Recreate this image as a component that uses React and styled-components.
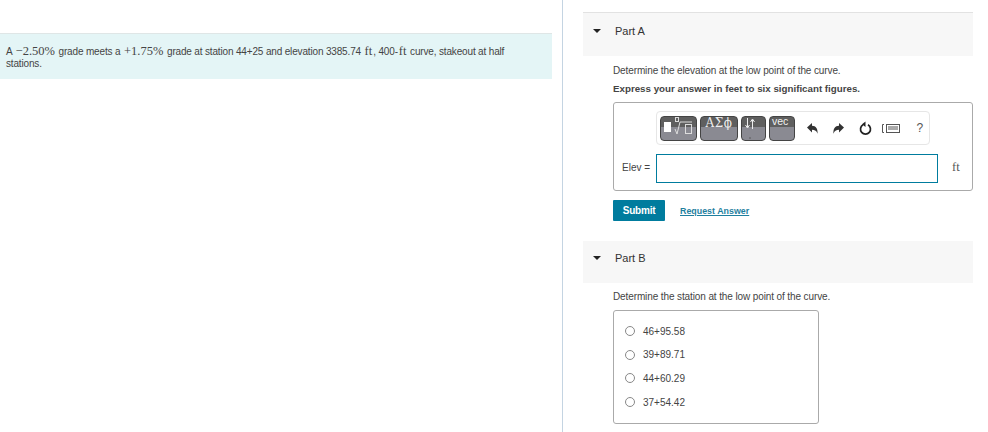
import React from 'react';
import styled, { createGlobalStyle } from 'styled-components';

const GlobalStyle = createGlobalStyle`
  html, body {
    margin: 0;
    padding: 0;
    background: #fff;
    font-family: "Liberation Sans", Arial, sans-serif;
    color: #333;
  }
`;

const Page = styled.div`
  display: grid;
  grid-template-columns: 562px 1px 1fr;
  height: 432px;
  overflow: hidden;
`;

const LeftPanel = styled.section`
  padding: 33px 10px 0 0;
`;

const Divider = styled.div`
  background: #c4d4e2;
`;

const RightPanel = styled.section`
  padding: 12px 15px 0 20px;
`;

const Intro = styled.div`
  background: #e4f5f6;
  border-top: 1px solid #dfe6e6;
  height: 46px;
  box-sizing: border-box;
  padding: 11px 30px 0 6px;
  font-size: 10px;
  letter-spacing: -0.16px;
  line-height: 12px;
  color: #444;
`;

const Formula = styled.span`
  font-family: "Liberation Serif", "Times New Roman", serif;
  font-size: 12.5px;
  letter-spacing: 0;
  margin: 0 1px;
  color: #444;
`;

const PartHeader = styled.div`
  display: flex;
  align-items: center;
  gap: 14px;
  height: ${(p) => p.$height}px;
  box-sizing: border-box;
  padding: 0 0 8px 10px;
  background: #f7f7f7;
  border-top: ${(p) => (p.$ruled ? '1px solid #e2e2e2' : 'none')};
  font-size: 11px;
  color: #333;
`;

const Caret = styled.span`
  width: 0;
  height: 0;
  border-left: 4.5px solid transparent;
  border-right: 4.5px solid transparent;
  border-top: 4px solid #222;
`;

const PartBody = styled.div`
  padding: ${(p) => p.$top}px 0 0 30px;
`;

const Prompt = styled.p`
  margin: 0;
  font-size: 10px;
  letter-spacing: -0.11px;
  line-height: 12px;
  color: #444;
`;

const Instruction = styled.p`
  margin: 6px 0 0;
  font-size: 9.75px;
  line-height: 12px;
  font-weight: bold;
  color: #444;
`;

const AnswerBox = styled.div`
  margin-top: 7px;
  width: 360px;
  height: 89px;
  box-sizing: border-box;
  border: 1px solid #aaa;
  border-radius: 3px;
  padding: 0 0 0 8px;
`;

const ToolbarRow = styled.div`
  display: flex;
  justify-content: center;
  height: 43px;
  box-sizing: border-box;
  padding: 8px 42px 0 34px;
`;

const Toolbar = styled.div`
  display: flex;
  align-items: center;
  gap: 3px;
  height: 34px;
  width: 100%;
  box-sizing: border-box;
  padding: 0 0 0 3px;
  border: 1px solid #e6e6e6;
  border-radius: 4px;
`;

const MathButton = styled.div`
  width: ${(p) => p.$width}px;
  height: 25px;
  flex: none;
  display: flex;
  align-items: flex-start;
  justify-content: ${(p) => (p.$start ? 'flex-start' : 'center')};
  box-sizing: border-box;
  padding-left: ${(p) => (p.$start ? 2 : 0)}px;
  border: 1px solid #444;
  border-radius: 4px;
  background: linear-gradient(#5f5f5f 0 45%, #8a8a92 45% 100%);
  color: #eee;
  font-size: 12px;
  line-height: 11px;
  overflow: hidden;
`;

const SerifGlyphs = styled.span`
  font-family: "DejaVu Serif", "Liberation Serif", serif;
  padding-top: 1px;
  letter-spacing: 0.5px;
`;

const VecLabel = styled.span`
  font-size: 10.5px;
  line-height: 9px;
  color: #f2f2f2;
`;

const ToolIcon = styled.svg`
  flex: none;
  display: block;
  margin-left: ${(p) => p.$left || 0}px;
`;

const Help = styled.span`
  flex: none;
  margin-left: 14px;
  font-size: 12px;
  color: #555;
`;

const InputRow = styled.div`
  display: flex;
  align-items: center;
  height: 29px;
  margin-top: 8px;
`;

const InputLabel = styled.span`
  width: 34px;
  padding-bottom: 2px;
  font-size: 10px;
  white-space: nowrap;
  color: #444;
`;

const AnswerInput = styled.div`
  width: 282px;
  height: 29px;
  box-sizing: border-box;
  border: 1px solid #007c9e;
`;

const Unit = styled.span`
  margin-left: 14px;
  padding-bottom: 2px;
  font-family: "Liberation Serif", serif;
  font-size: 12.5px;
  color: #555;
`;

const Actions = styled.div`
  display: flex;
  align-items: center;
  gap: 15px;
  margin: 9px 0 20px;
`;

const SubmitButton = styled.div`
  width: 52px;
  height: 21px;
  display: flex;
  align-items: center;
  justify-content: center;
  background: #007c9e;
  border-radius: 1px;
  color: #fff;
  font-size: 10px;
  letter-spacing: -0.2px;
  font-weight: bold;
`;

const RequestLink = styled.a`
  font-size: 8.9px;
  font-weight: bold;
  color: #1f7f9f;
  text-decoration: underline;
`;

const ChoiceBox = styled.div`
  margin-top: 7px;
  width: 206px;
  height: 114px;
  box-sizing: border-box;
  border: 1px solid #aaa;
  border-radius: 3px;
  padding: 14px 0 0 11px;
  display: flex;
  flex-direction: column;
  gap: 11.7px;
`;

const Choice = styled.label`
  display: flex;
  align-items: center;
  gap: 8px;
  height: 12px;
  font-size: 10px;
  color: #444;
`;

const Radio = styled.span`
  width: 10px;
  height: 10px;
  box-sizing: border-box;
  border: 1px solid #888;
  border-radius: 50%;
  background: #fff;
`;

const RootIcon = () => (
  <ToolIcon width="33" height="20" viewBox="0 0 33 20" fill="none" stroke="#ddd" strokeWidth="1">
    <rect x="2" y="5" width="7" height="10" fill="#fff" stroke="none" />
    <path d="M13 12l2 5 3-12h12" />
    <rect x="13.500" y="0.500" width="3" height="4" />
    <rect x="23.500" y="7.500" width="6" height="9" />
  </ToolIcon>
);

const SortIcon = () => (
  <ToolIcon width="14" height="22" viewBox="0 0 14 22" fill="none" stroke="#eee" strokeWidth="1">
    <path d="M3.500 1v9M1.500 8l2 3 2-3M8.500 12V3M6.500 5l2-3 2 3" />
    <circle cx="6" cy="21" r="0.800" fill="#555" stroke="none" />
  </ToolIcon>
);

const UndoIcon = ({ flip, left }) => (
  <ToolIcon $left={left} width="11" height="11" viewBox="0 0 11 11" style={flip ? { transform: 'scaleX(-1)' } : undefined}>
    <path d="M0 4.500L5 0v2.800c4 0 6 3 5.500 8-1-3-2.500-4-5.500-4v2.700z" fill="#333" />
  </ToolIcon>
);

const ResetIcon = () => (
  <ToolIcon $left={11.5} width="13" height="14" viewBox="0 0 13 14" fill="none">
    <path d="M4 3.800a5 5 0 1 0 5 0" stroke="#222" strokeWidth="1.700" />
    <path d="M6.500 0.500v5.500l-3.500-2.700z" fill="#222" />
  </ToolIcon>
);

const KeyboardIcon = () => (
  <ToolIcon $left={7} width="18" height="9" viewBox="0 0 18 9" fill="none" stroke="#555" strokeWidth="1">
    <path d="M2 0.500H0.500v8H2" />
    <rect x="4.500" y="0.500" width="13" height="8" />
    <path d="M6 3h10M6 5h10" />
  </ToolIcon>
);

const choices = ['46+95.58', '39+89.71', '44+60.29', '37+54.42'];

export default function App() {
  return (
    <>
      <GlobalStyle />
      <Page>
        <LeftPanel>
          <Intro>
            A <Formula>−2.50%</Formula> grade meets a <Formula>+1.75%</Formula> grade at station 44+25 and elevation 3385.74{' '}
            <Formula>ft</Formula>, 400-<Formula>ft</Formula> curve, stakeout at half stations.
          </Intro>
        </LeftPanel>
        <Divider />
        <RightPanel>
          <PartHeader $height={44} $ruled>
            <Caret />
            Part A
          </PartHeader>
          <PartBody $top={9}>
            <Prompt>Determine the elevation at the low point of the curve.</Prompt>
            <Instruction>Express your answer in feet to six significant figures.</Instruction>
            <AnswerBox>
              <ToolbarRow>
                <Toolbar>
                  <MathButton $width={37}><RootIcon /></MathButton>
                  <MathButton $width={38}><SerifGlyphs>ΑΣϕ</SerifGlyphs></MathButton>
                  <MathButton $width={25} $start><SortIcon /></MathButton>
                  <MathButton $width={26} $start><VecLabel>vec</VecLabel></MathButton>
                  <UndoIcon left={9} />
                  <UndoIcon left={12} flip />
                  <ResetIcon />
                  <KeyboardIcon />
                  <Help>?</Help>
                </Toolbar>
              </ToolbarRow>
              <InputRow>
                <InputLabel>Elev =</InputLabel>
                <AnswerInput />
                <Unit>ft</Unit>
              </InputRow>
            </AnswerBox>
            <Actions>
              <SubmitButton>Submit</SubmitButton>
              <RequestLink>Request Answer</RequestLink>
            </Actions>
          </PartBody>
          <PartHeader $height={42}>
            <Caret />
            Part B
          </PartHeader>
          <PartBody $top={8}>
            <Prompt>Determine the station at the low point of the curve.</Prompt>
            <ChoiceBox>
              {choices.map((choice) => (
                <Choice key={choice}>
                  <Radio />
                  {choice}
                </Choice>
              ))}
            </ChoiceBox>
          </PartBody>
        </RightPanel>
      </Page>
    </>
  );
}
